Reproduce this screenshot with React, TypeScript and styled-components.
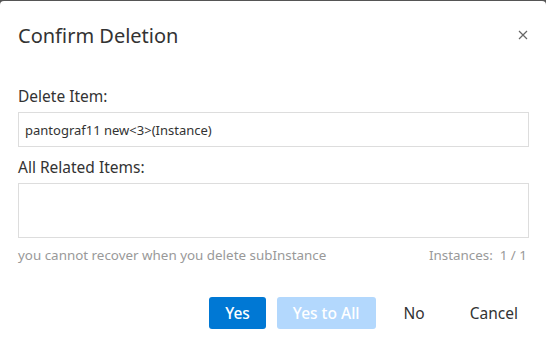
import React from "react";
import styled, { createGlobalStyle } from "styled-components";

const GlobalStyle = createGlobalStyle`
    html, body {
        margin: 0;
        padding: 0;
        background: #555555;
        font-family: "Noto Sans", "Open Sans", sans-serif;
    }
`;

const Dialog = styled.div`
    box-sizing: border-box;
    margin-top: 1px;
    width: 546px;
    height: 341px;
    background: #ffffff;
    border-radius: 4px 4px 0 0;
    display: flex;
    flex-direction: column;
`;

const Header = styled.div`
    display: flex;
    align-items: center;
    justify-content: space-between;
    padding: 18px 16px 0 18px;
    height: 32px;
`;

const Title = styled.h1`
    margin: 0;
    font-size: 20px;
    font-weight: 400;
    color: #333333;
`;

const CloseButton = styled.button`
    border: none;
    background: none;
    padding: 0;
    width: 14px;
    height: 14px;
    display: flex;
    align-items: center;
    justify-content: center;
    cursor: pointer;
`;

const Body = styled.div`
    display: flex;
    flex-direction: column;
    padding: 35px 17px 0 18px;
`;

const Label = styled.label`
    font-size: 15.5px;
    color: #333333;
    line-height: 20px;
    margin-bottom: 6px;
`;

const Field = styled.div<{ $tall?: boolean }>`
    box-sizing: border-box;
    height: ${(p) => (p.$tall ? "55px" : "35px")};
    border: 1px solid #dddddd;
    padding: 0 6px;
    display: flex;
    align-items: ${(p) => (p.$tall ? "flex-start" : "center")};
    font-size: 13px;
    color: #333333;
    margin-bottom: ${(p) => (p.$tall ? "8px" : "10px")};
`;

const Hint = styled.div`
    display: flex;
    justify-content: space-between;
    font-size: 13.4px;
    color: #999999;
    line-height: 18px;
    padding-right: 2px;
`;

const Footer = styled.div`
    display: flex;
    justify-content: flex-end;
    align-items: center;
    gap: 11px;
    padding: 33px 11px 0 0;
`;

const Button = styled.button<{ $variant: "primary" | "disabled" | "text" }>`
    box-sizing: border-box;
    height: 32px;
    border: none;
    border-radius: 3px;
    font-family: inherit;
    font-size: 15.5px;
    font-weight: ${(p) => (p.$variant === "text" ? 400 : 500)};
    padding: 0 ${(p) => (p.$variant === "text" ? "17px" : "16px")};
    background: ${(p) =>
        p.$variant === "primary" ? "#0078d4" : p.$variant === "disabled" ? "#b3d8fd" : "transparent"};
    color: ${(p) => (p.$variant === "text" ? "#333333" : "#ffffff")};
    cursor: ${(p) => (p.$variant === "disabled" ? "default" : "pointer")};
`;

const App = () => {
    return (
        <>
            <GlobalStyle />
            <Dialog>
                <Header>
                    <Title>Confirm Deletion</Title>
                    <CloseButton aria-label="close">
                        <svg width="10" height="10" viewBox="0 0 10 10">
                            <path d="M1 1L9 9M9 1L1 9" stroke="#666" strokeWidth="1.2" />
                        </svg>
                    </CloseButton>
                </Header>
                <Body>
                    <Label>Delete Item:</Label>
                    <Field>pantograf11 new&lt;3&gt;(Instance)</Field>
                    <Label>All Related Items:</Label>
                    <Field $tall />
                    <Hint>
                        <span>you cannot recover when you delete subInstance</span>
                        <span>Instances:&nbsp; 1 / 1</span>
                    </Hint>
                </Body>
                <Footer>
                    <Button $variant="primary">Yes</Button>
                    <Button $variant="disabled">Yes to All</Button>
                    <Button $variant="text">No</Button>
                    <Button $variant="text">Cancel</Button>
                </Footer>
            </Dialog>
        </>
    );
};

export default App;
